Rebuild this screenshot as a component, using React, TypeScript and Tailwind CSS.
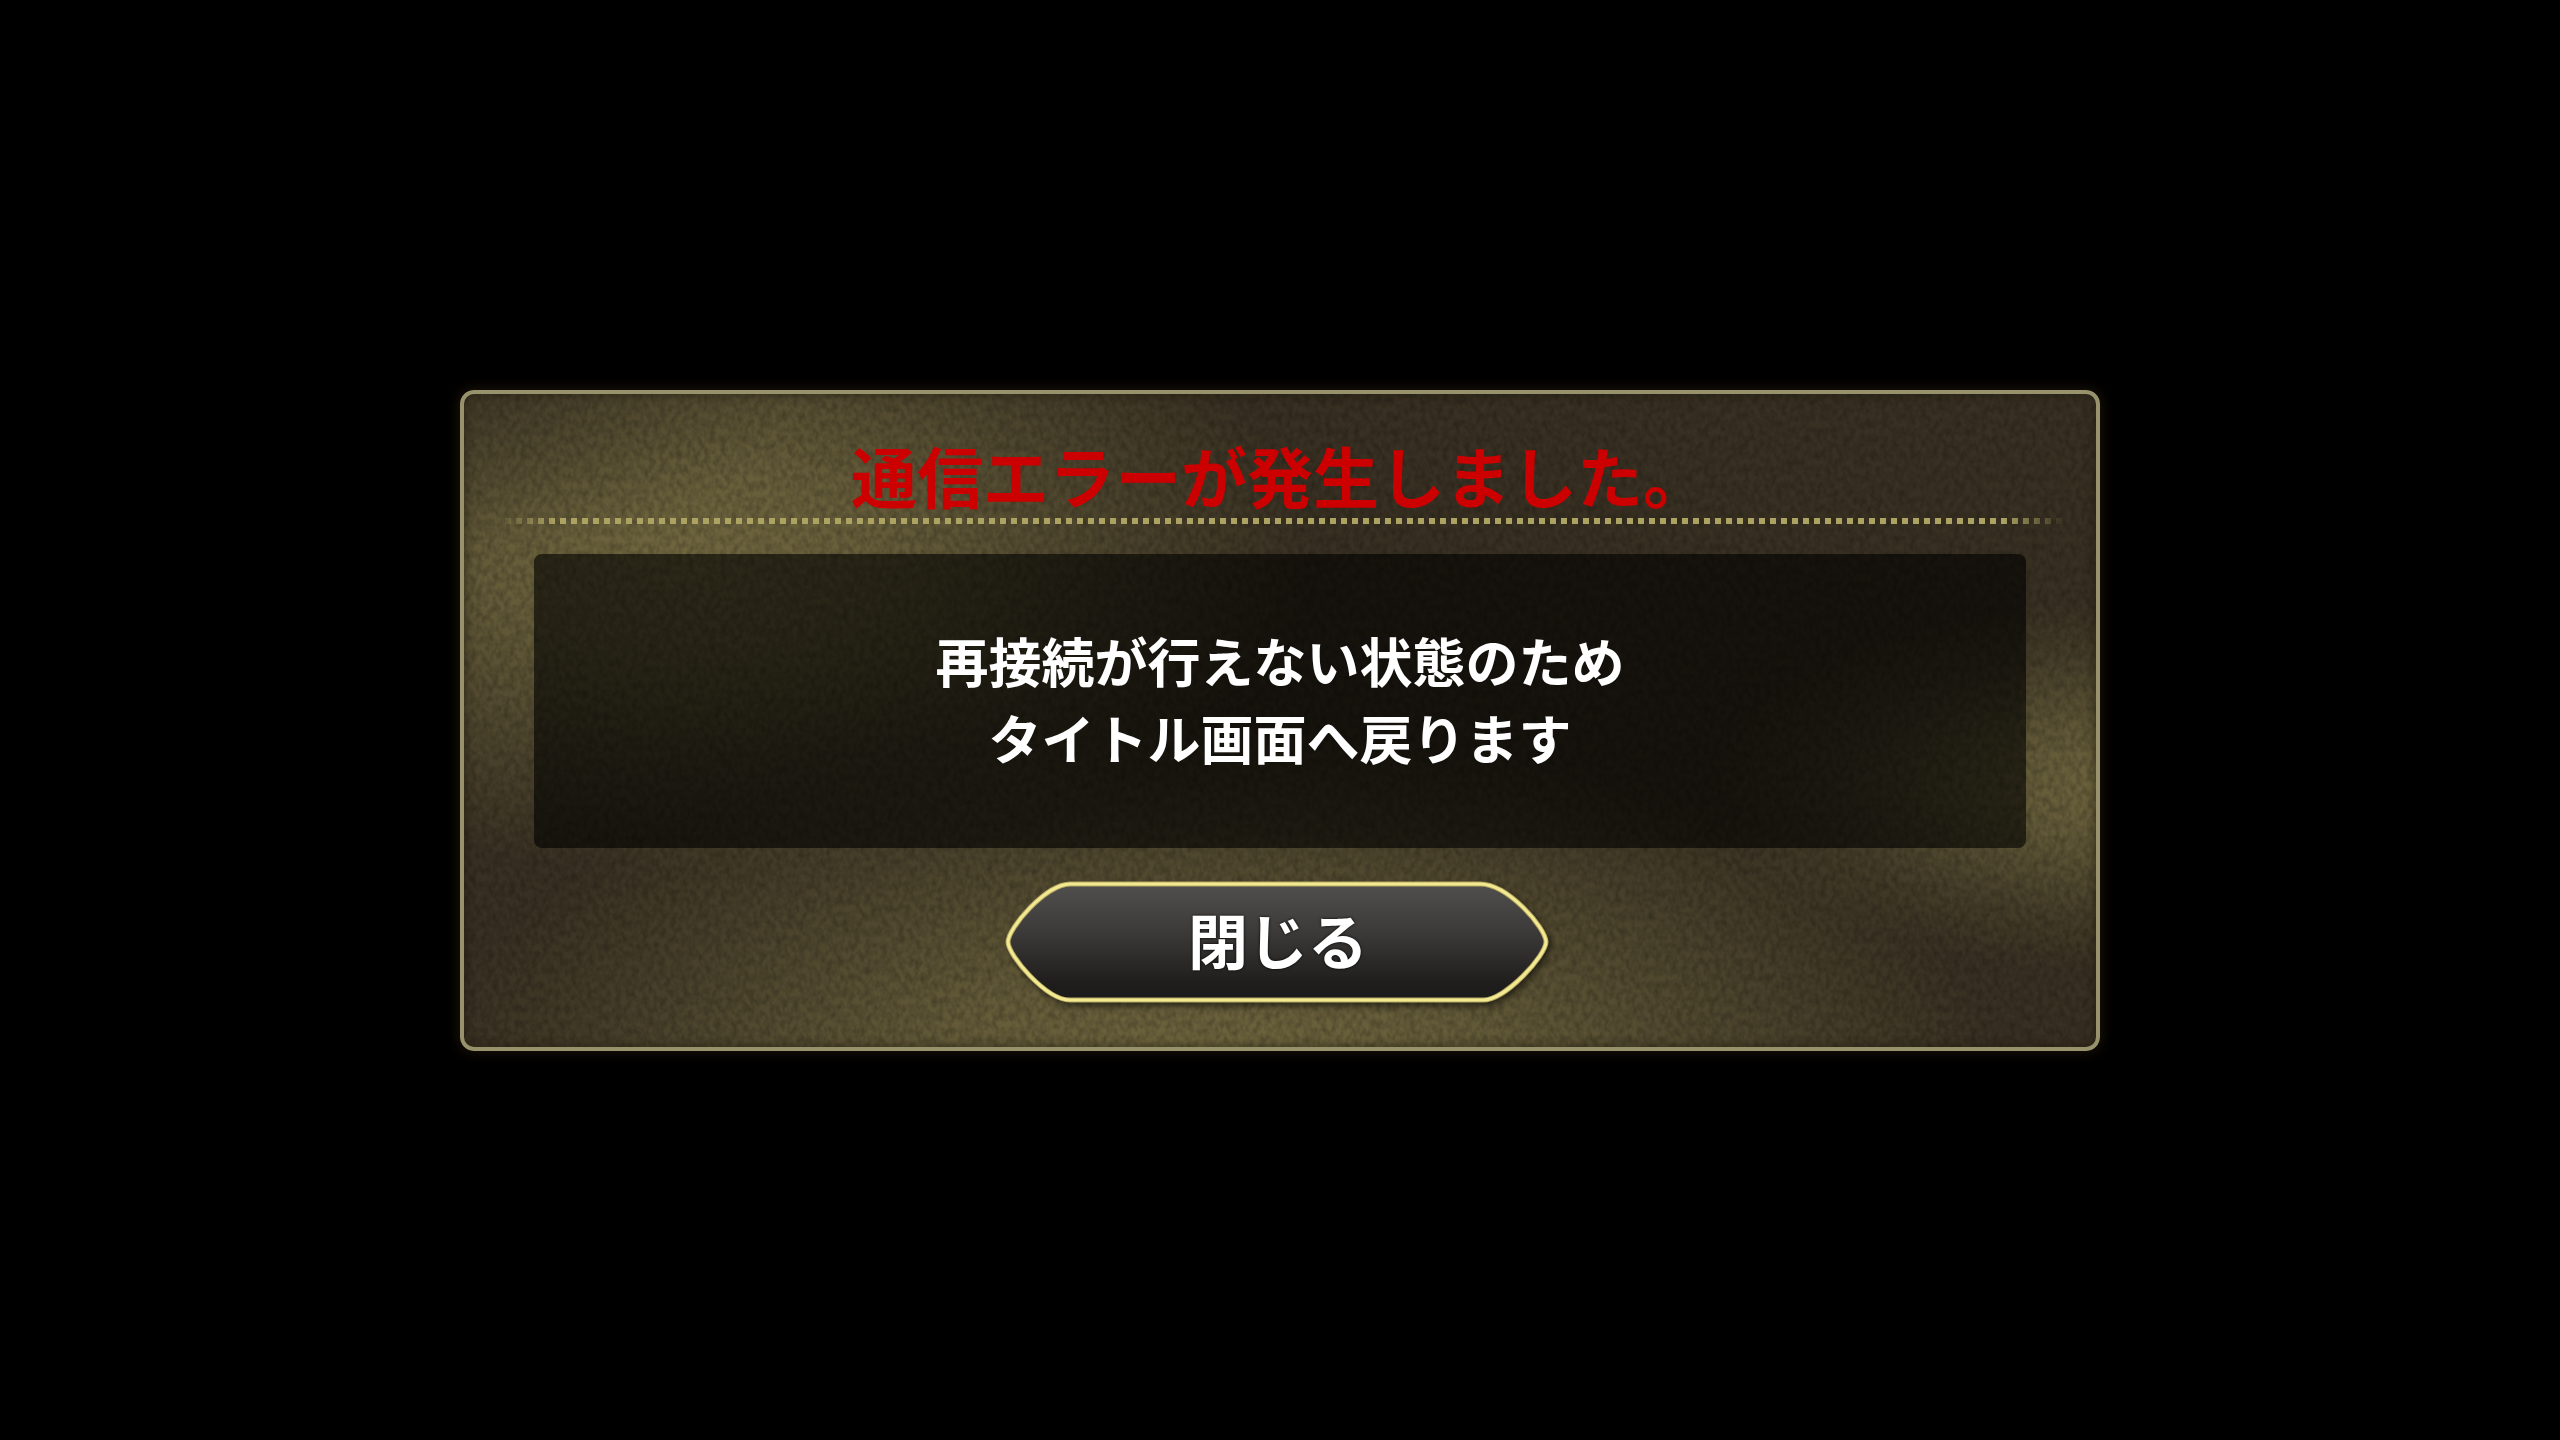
import type { ReactNode } from 'react'

interface DialogButtonProps {
  children: ReactNode
  onClick?: () => void
}

const message = ['再接続が行えない状態のため', 'タイトル画面へ戻ります']

// Light patches of the cloth, painted over the dark base colour
const clothLight = [
  'bg-[#383022]',
  'bg-[radial-gradient(ellipse_20%_24%_at_0%_0%,#383022a0_0%,#38302200_100%),radial-gradient(ellipse_38%_48%_at_14%_25%,#70673f_0%,#70673fd0_30%,#70673f60_65%,#70673f00_100%),radial-gradient(ellipse_48%_54%_at_46%_105%,#70673f_0%,#70673fc8_35%,#70673f58_70%,#70673f00_100%),radial-gradient(ellipse_26%_28%_at_102%_60%,#70673f_0%,#70673fb0_35%,#70673f40_70%,#70673f00_100%)]',
].join(' ')

function ClothTexture() {
  return (
    <svg className="absolute inset-0 h-full w-full" aria-hidden="true">
      <filter id="cloth" x="0" y="0" width="100%" height="100%" colorInterpolationFilters="sRGB">
        <feTurbulence type="fractalNoise" baseFrequency="0.18 0.13" numOctaves="2" seed="7" />
        <feColorMatrix values="0 0 0 0 0  0 0 0 0 0  0 0 0 0 0  0.45 0 0 0 -0.14" />
      </filter>
      <rect width="100%" height="100%" filter="url(#cloth)" />
    </svg>
  )
}

function DialogButton({ children, onClick }: DialogButtonProps) {
  return (
    <button
      type="button"
      onClick={onClick}
      className="relative isolate h-[122px] w-[548px] cursor-pointer pr-1 pb-2 text-[60px] leading-none font-bold text-white [text-shadow:0_0_3px_#000]"
    >
      <svg
        viewBox="0 0 548 122"
        className="absolute inset-0 -z-10 h-full w-full overflow-visible drop-shadow-[3px_4px_3px_rgba(0,0,0,0.5)]"
        aria-hidden="true"
      >
        <defs>
          <linearGradient id="face" x1="0" y1="0" x2="0" y2="1">
            <stop offset="0" stopColor="#504f4e" />
            <stop offset="0.4" stopColor="#3d3b3a" />
            <stop offset="0.85" stopColor="#1f1e1d" />
            <stop offset="1" stopColor="#1b1a1a" />
          </linearGradient>
        </defs>
        <path
          d="M64 2H474C502 2 540 46 540 60C540 73 500 118 477 118H64C40 118 2 73 2 60C2 46 40 2 64 2Z"
          fill="url(#face)"
          stroke="#b5a962"
          strokeWidth="5"
        />
        <path
          d="M64 2H474C502 2 540 46 540 60C540 73 500 118 477 118H64C40 118 2 73 2 60C2 46 40 2 64 2Z"
          fill="none"
          stroke="#f3e990"
          strokeWidth="3"
        />
      </svg>
      {children}
    </button>
  )
}

export default function App() {
  return (
    <main
      lang="ja"
      className="flex min-h-screen items-center justify-center bg-black font-['Noto_Sans_CJK_JP',sans-serif]"
    >
      <section
        role="alertdialog"
        aria-labelledby="dialog-title"
        aria-describedby="dialog-message"
        className={`relative isolate w-full max-w-[1640px] overflow-hidden rounded-[14px] shadow-[0_0_12px_3px_#171008] ${clothLight}`}
      >
        <div className="absolute inset-0 -z-10">
          <ClothTexture />
        </div>

        <div className="flex flex-col rounded-[14px] border-4 border-[#98926c] pt-10 pb-[43px] shadow-[inset_0_0_8px_2px_rgba(30,26,14,0.5)]">
          <h1
            id="dialog-title"
            className="mb-1 text-center text-[66px] leading-[80px] font-bold text-[#cc0000]"
          >
            通信エラーが発生しました。
          </h1>

          {/* Dotted rule, faded at both ends */}
          <div className="mx-[30px] h-[6px] bg-[repeating-linear-gradient(90deg,#aca262_0_6px,transparent_6px_11px)] [mask-image:linear-gradient(90deg,transparent,#000_4%,#000_96%,transparent)]" />

          <div
            id="dialog-message"
            className="mx-[70px] mt-[30px] mb-[34px] flex h-[294px] flex-col justify-center rounded-lg bg-black/60 pb-1 text-center text-[53px] leading-[77px] font-bold text-white"
          >
            {message.map((line) => (
              <p key={line}>{line}</p>
            ))}
          </div>

          <div className="flex justify-center">
            <DialogButton>閉じる</DialogButton>
          </div>
        </div>
      </section>
    </main>
  )
}
